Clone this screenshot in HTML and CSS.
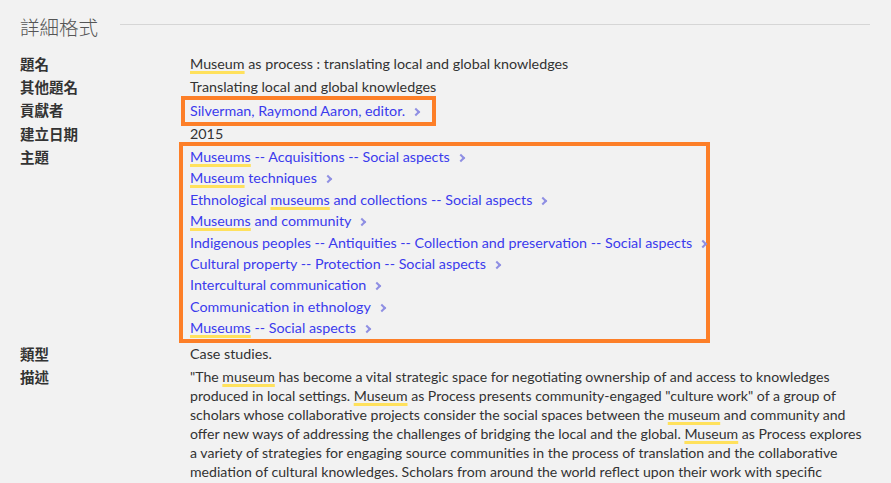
FILE: index.html
```html
<!DOCTYPE html>
<html>
	<head>
		<meta charset="UTF-8">
		<title>詳細格式</title>
		<link rel="stylesheet" href="styles.css">
	</head>
	<body>
		<div class="details">
			<div class="sectiontitle">
				<h2>詳細格式</h2>
				<span class="rule"></span>
			</div>
			<div class="item">
				<span class="label">題名</span>
				<div class="value"><span class="hl">Museum</span> as process : translating local and global knowledges</div>
			</div>
			<div class="item">
				<span class="label">其他題名</span>
				<div class="value">Translating local and global knowledges</div>
			</div>
			<div class="item">
				<span class="label">貢獻者</span>
				<div class="value">
					<div class="marked marked-one">
						<a class="link" href="#">Silverman, Raymond Aaron, editor.<i class="chev"></i></a>
					</div>
				</div>
			</div>
			<div class="item">
				<span class="label">建立日期</span>
				<div class="value">2015</div>
			</div>
			<div class="item">
				<span class="label">主題</span>
				<div class="value">
					<div class="marked marked-list">
						<a class="link" href="#"><span class="hl">Museums</span> -- Acquisitions -- Social aspects<i class="chev"></i></a>
						<a class="link" href="#"><span class="hl">Museum</span> techniques<i class="chev"></i></a>
						<a class="link" href="#">Ethnological <span class="hl">museums</span> and collections -- Social aspects<i class="chev"></i></a>
						<a class="link" href="#"><span class="hl">Museums</span> and community<i class="chev"></i></a>
						<a class="link" href="#">Indigenous peoples -- Antiquities -- Collection and preservation -- Social aspects<i class="chev"></i></a>
						<a class="link" href="#">Cultural property -- Protection -- Social aspects<i class="chev"></i></a>
						<a class="link" href="#">Intercultural communication<i class="chev"></i></a>
						<a class="link" href="#">Communication in ethnology<i class="chev"></i></a>
						<a class="link" href="#"><span class="hl">Museums</span> -- Social aspects<i class="chev"></i></a>
					</div>
				</div>
			</div>
			<div class="item">
				<span class="label">類型</span>
				<div class="value">Case studies.</div>
			</div>
			<div class="item">
				<span class="label">描述</span>
				<div class="value desc">"The <span class="hl">museum</span> has become a vital strategic space for negotiating ownership of and access to knowledges produced in local settings. <span class="hl">Museum</span> as Process presents community-engaged "culture work" of a group of scholars whose collaborative projects consider the social spaces between the <span class="hl">museum</span> and community and offer new ways of addressing the challenges of bridging the local and the global. <span class="hl">Museum</span> as Process explores a variety of strategies for engaging source communities in the process of translation and the collaborative mediation of cultural knowledges. Scholars from around the world reflect upon their work with specific communities and the ways in which their work has been informed by local knowledges.</div>
			</div>
		</div>
	</body>
</html>
```
FILE: styles.css
```css
* {
	margin: 0;
	padding: 0;
	box-sizing: border-box;
}
html, body {
	height: 100%;
	overflow: hidden;
}
body {
	background-color: #f2f2f2;
	color: #333;
	font-family: "Lato", "Noto Sans CJK TC", sans-serif;
	font-size: 14.3px;
}
.details {
	padding: 8px 21px 0 20px;
}
.sectiontitle {
	display: flex;
	align-items: center;
	gap: 22px;
	height: 36px;
	margin-bottom: 8px;
}
.sectiontitle h2 {
	font-family: "Noto Sans CJK TC", sans-serif;
	font-size: 19.5px;
	font-weight: 300;
	color: #555;
}
.sectiontitle .rule {
	flex: 1;
	height: 1px;
	background-color: #d6d6d6;
	margin-top: -3px;
}
.item {
	display: flex;
	line-height: 23px;
}
.label {
	flex: 0 0 170px;
	font-family: "Noto Sans CJK TC", sans-serif;
	font-weight: 700;
	font-size: 14.5px;
	color: #333;
}
.value {
	flex: 1;
}
.hl {
	text-decoration: underline;
	text-decoration-color: #ffe15c;
	text-decoration-thickness: 3px;
	text-underline-offset: 2px;
	text-decoration-skip-ink: none;
}
.link {
	color: #3b3bed;
	text-decoration: none;
	white-space: nowrap;
}
.chev {
	display: inline-block;
	width: 6px;
	height: 6px;
	border-top: 2px solid #8f8fe3;
	border-right: 2px solid #8f8fe3;
	transform: rotate(45deg);
	margin-left: 8px;
	vertical-align: 1px;
}
.marked {
	border: 4px solid #fd7f28;
}
.marked-one {
	width: fit-content;
	margin: -2px 0 -4px -9px;
	padding: 0 13px 0 5px;
	line-height: 22px;
}
.marked-list {
	width: 531px;
	margin: -3px 0 -1px -11px;
	padding: 0 0 0 7px;
}
.marked-list .link {
	display: block;
	line-height: 21.4px;
}
.desc {
	font-size: 14.1px;
	line-height: 19px;
	padding-top: 2px;
}
```
